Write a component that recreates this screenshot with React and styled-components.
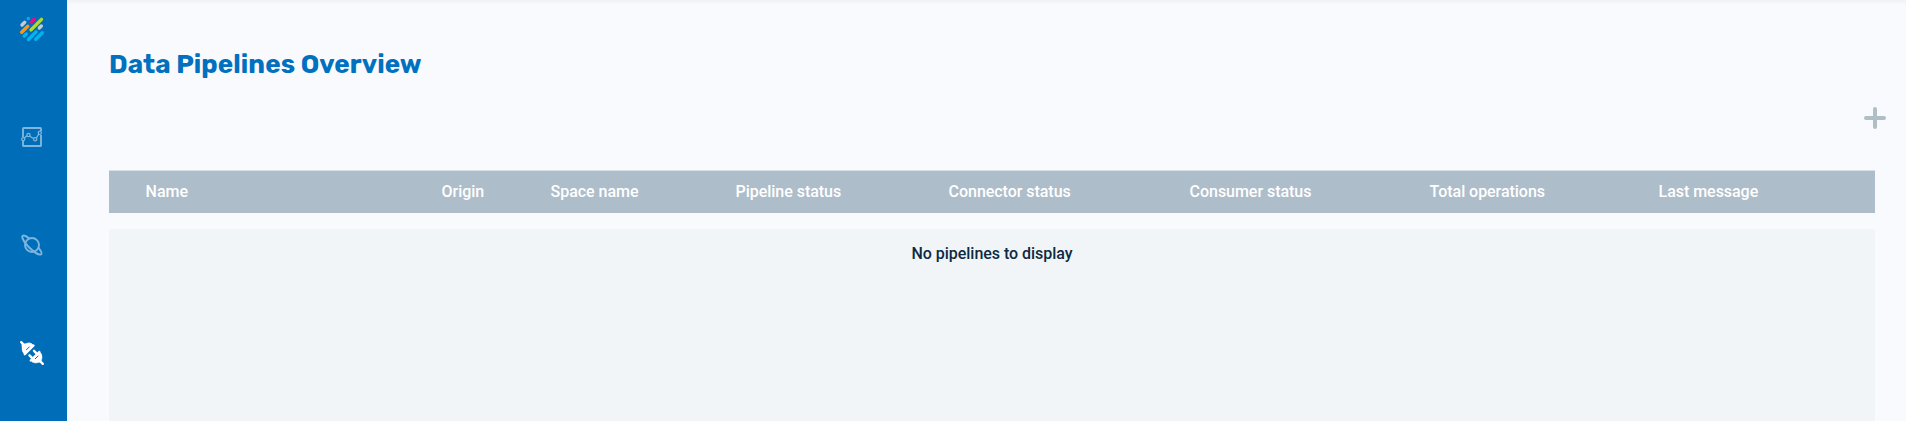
import React from "react";
import styled, { createGlobalStyle } from "styled-components";

const GlobalStyle = createGlobalStyle`
  * { box-sizing: border-box; }
  body { margin: 0; background: #f9fafe; font-family: Roboto, "Liberation Sans", sans-serif; overflow: hidden; }
`;
const Page = styled.div`
  display: flex;
  height: 100vh;
`;
const Sidebar = styled.nav`
  flex: 0 0 67px;
  display: flex;
  flex-direction: column;
  align-items: center;
  gap: 72px;
  background: #006db8;
  padding: 11px 3px 0 0;
`;
const NavItem = styled.a`
  display: flex;
  flex: 0 0 36px;
  align-items: center;
  justify-content: center;
  width: 64px;
  color: ${(p) => (p.$active ? "#fff" : "#7db5dd")};
  svg { display: block; }
`;
const Main = styled.main`
  flex: 1;
  min-width: 0;
  display: flex;
  flex-direction: column;
  padding: 46px 31px 0 42px;
  box-shadow: inset 0 4px 4px -2px rgba(60, 70, 90, 0.06);
`;
const Title = styled.h1`
  margin: 0;
  height: 36px;
  font-family: Rubik, Inter, Roboto, sans-serif;
  font-size: 26px;
  line-height: 38px;
  font-weight: 700;
  letter-spacing: 0.07px;
  color: #0071bf;
  white-space: nowrap;
`;
const Toolbar = styled.div`
  display: flex;
  justify-content: flex-end;
  height: 88px;
  padding-top: 25px;
  margin-right: -11px;
`;
const AddButton = styled.button`
  width: 22px;
  height: 22px;
  padding: 0;
  border: 0;
  background: none;
  svg { display: block; }
`;
const HeaderRow = styled.div`
  display: grid;
  grid-template-columns: 296px 109px 185px 213px 241px 240px 229px 1fr;
  height: 43px;
  padding-left: 36.6px;
  border-top: 1px solid #d8e0e5;
  background: #aebdca;
`;
const HeaderCell = styled.div`
  font-size: 16px;
  line-height: 42px;
  font-weight: 500;
  letter-spacing: -0.04px;
  color: #fff;
  white-space: nowrap;
`;
const Body = styled.section`
  flex: 1;
  margin-top: 16px;
  padding-top: 13px;
  border-radius: 3px 3px 0 0;
  background: #f1f5f8;
`;
const Empty = styled.p`
  margin: 0;
  text-align: center;
  font-size: 16px;
  line-height: 24px;
  font-weight: 500;
  letter-spacing: -0.04px;
  color: #0d2a42;
`;

const LogoIcon = () => (
  <svg width="26" height="26" viewBox="0 0 26 26" fill="none" strokeWidth="3.4" strokeLinecap="round">
    <path d="M9.300 2.500h.01" stroke="#00aeea" />
    <path d="M3 9 5.600 6.400" stroke="#c3cbda" />
    <path d="M12.300 6.100 15.100 3.300" stroke="#ec0a8c" />
    <path d="M2.700 16.300 8.700 10.300" stroke="#ff9412" />
    <path d="M12 13.900 22.500 3.400" stroke="#b5da2a" />
    <path d="M20.300 12 22.300 10" stroke="#c3cbda" />
    <path d="M5.300 20 7.300 18M9.500 23.500 17.100 15.900M16.700 23.300 23.300 16.700" stroke="#00b4ef" />
  </svg>
);
const ChartIcon = () => (
  <svg width="22" height="22" viewBox="0 0 22 22" fill="none" stroke="currentColor" strokeWidth="1.3">
    <path d="M2 11V2.600Q2 2 2.600 2H19.400Q20 2 20 2.600V5M20 9V19.400Q20 20 19.400 20H2.600Q2 20 2 19.400V15" strokeWidth="1.9" />
    <path d="m3.300 12.300 2.500-2.500M8.800 10.200l3.800 2.300M15.300 12l2.500-3.800" />
    <circle cx="2.200" cy="13.200" r="1.500" />
    <circle cx="7.500" cy="9" r="1.600" />
    <circle cx="14.200" cy="13.200" r="1.600" />
    <circle cx="18.800" cy="6.800" r="1.600" />
  </svg>
);
const PlanetIcon = () => (
  <svg width="22" height="22" viewBox="0 0 22 22" fill="none" stroke="currentColor" strokeWidth="1.9">
    <circle cx="11" cy="11" r="7" />
    <path d="M8.200 4.500C4.700 1.600 2.300 1.100 1.600 1.800.4 3.200 3.300 8.300 8 13.300 13 18.200 18.600 21.600 20.200 20.200 21.100 19.400 20.300 17.300 17.600 13.800" />
  </svg>
);
const PlugIcon = () => (
  <svg width="26" height="26" viewBox="0 0 26 26" fill="none" stroke="currentColor" strokeLinecap="round">
    <path d="M2.200 2.200 5 5M21 21l2.800 2.800" strokeWidth="2.400" />
    <path d="M3 4.500 10 2.800Q13 3 14.500 5.500L5.600 14.200Q2.800 12.200 3 8Z" fill="currentColor" strokeWidth="0.500" />
    <path d="M14.500 5.500 5.800 14.200" strokeWidth="2.400" />
    <path d="M20.600 11.700Q23.500 14 23 18L22 22 16.500 23Q13 22.500 11.700 20.500Z" fill="currentColor" strokeWidth="0.500" />
    <path d="M20.300 12 11.800 20.500" strokeWidth="2.400" />
    <path d="M15 10.800 18 13.800M10.500 15.300 13.500 18.300" strokeWidth="2.400" />
    <path d="M7.500 9.700 10.300 6.900M16.200 18.800 19 16" stroke="#006db8" strokeWidth="1" />
  </svg>
);

const columns = ["Name", "Origin", "Space name", "Pipeline status", "Connector status", "Consumer status", "Total operations", "Last message"];

export default function App() {
  return (
    <Page>
      <GlobalStyle />
      <Sidebar>
        <NavItem><LogoIcon /></NavItem>
        <NavItem><ChartIcon /></NavItem>
        <NavItem><PlanetIcon /></NavItem>
        <NavItem $active><PlugIcon /></NavItem>
      </Sidebar>
      <Main>
        <Title>Data Pipelines Overview</Title>
        <Toolbar>
          <AddButton aria-label="Add pipeline">
            <svg width="22" height="22" viewBox="0 0 22 22" stroke="#b0bec5" strokeWidth="4" strokeLinecap="round">
              <path d="M11 2V20M2 11H20" />
            </svg>
          </AddButton>
        </Toolbar>
        <HeaderRow>
          {columns.map((c) => <HeaderCell key={c}>{c}</HeaderCell>)}
        </HeaderRow>
        <Body><Empty>No pipelines to display</Empty></Body>
      </Main>
    </Page>
  );
}
